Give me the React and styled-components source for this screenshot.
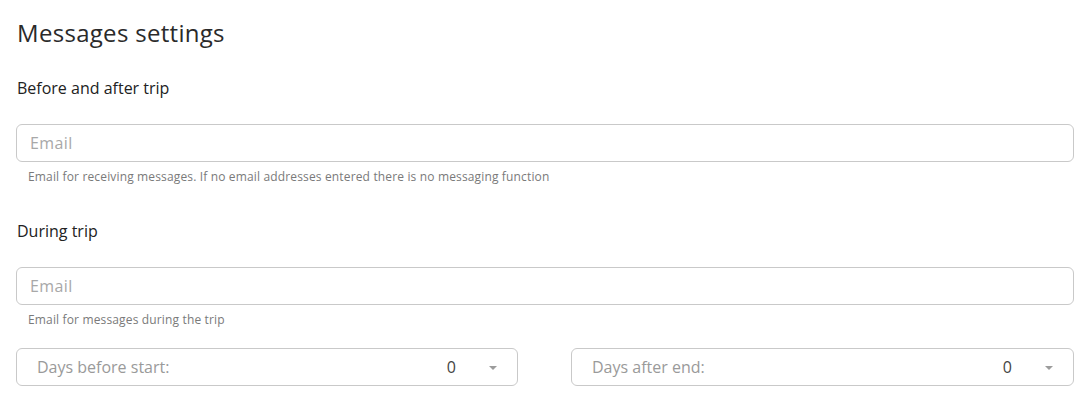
import React from 'react'
import styled, { createGlobalStyle } from 'styled-components'

const GlobalStyle = createGlobalStyle`
  body {
    margin: 0;
    background: #fff;
    font-family: "Open Sans", "DejaVu Sans", sans-serif;
  }
`

const Page = styled.div`
  padding: 16px 16px 0 16px;
  width: 1058px;
  display: flex;
  flex-direction: column;
`

const Title = styled.h1`
  margin: 0;
  font-size: 24px;
  font-weight: 400;
  letter-spacing: 0.3px;
  color: #2a2a2a;
  line-height: 34px;
  padding-left: 1px;
`

const SectionTitle = styled.h2`
  margin: ${(p) => (p.first ? '28px' : '37px')} 0 0 0;
  font-size: 16px;
  font-weight: 400;
  color: #222;
  line-height: 20px;
  padding-left: 1px;
`

const Field = styled.div`
  display: flex;
  flex-direction: column;
  margin-top: 26px;
`

const Input = styled.input`
  box-sizing: border-box;
  height: 38px;
  width: 100%;
  border: 1px solid #c9c9c9;
  border-radius: 6px;
  padding: 0 13px;
  font-family: inherit;
  font-size: 16px;
  letter-spacing: 0.4px;
  color: #333;
  outline: none;

  &::placeholder {
    color: #a8a8a8;
  }
`

const Hint = styled.div`
  margin-top: 8px;
  padding-left: 12px;
  font-size: 12px;
  letter-spacing: 0.15px;
  color: #7a7a7a;
  line-height: 14px;
`

const SelectRow = styled.div`
  display: grid;
  grid-template-columns: 502px 503px;
  justify-content: space-between;
  margin-top: 21px;
`

const SelectBox = styled.div`
  box-sizing: border-box;
  height: 38px;
  border: 1px solid #c9c9c9;
  border-radius: 6px;
  display: flex;
  align-items: center;
  padding: 0 20px 0 20px;
  font-size: 16px;
`

const SelectLabel = styled.span`
  flex: 1;
  color: #9a9a9a;
`

const SelectValue = styled.span`
  color: #444;
  margin-right: 33px;
`

const Caret = styled.span`
  width: 0;
  height: 0;
  border-left: 4px solid transparent;
  border-right: 4px solid transparent;
  border-top: 4px solid #9c9c9c;
  margin-top: 2px;
`

const DaysSelect = ({ label, value }) => (
  <SelectBox>
    <SelectLabel>{label}</SelectLabel>
    <SelectValue>{value}</SelectValue>
    <Caret />
  </SelectBox>
)

const App = () => (
  <>
    <GlobalStyle />
    <Page>
      <Title>Messages settings</Title>

      <SectionTitle first>Before and after trip</SectionTitle>
      <Field>
        <Input placeholder="Email" />
        <Hint>
          Email for receiving messages. If no email addresses entered there is
          no messaging function
        </Hint>
      </Field>

      <SectionTitle>During trip</SectionTitle>
      <Field>
        <Input placeholder="Email" />
        <Hint>Email for messages during the trip</Hint>
      </Field>

      <SelectRow>
        <DaysSelect label="Days before start:" value="0" />
        <DaysSelect label="Days after end:" value="0" />
      </SelectRow>
    </Page>
  </>
)

export default App
